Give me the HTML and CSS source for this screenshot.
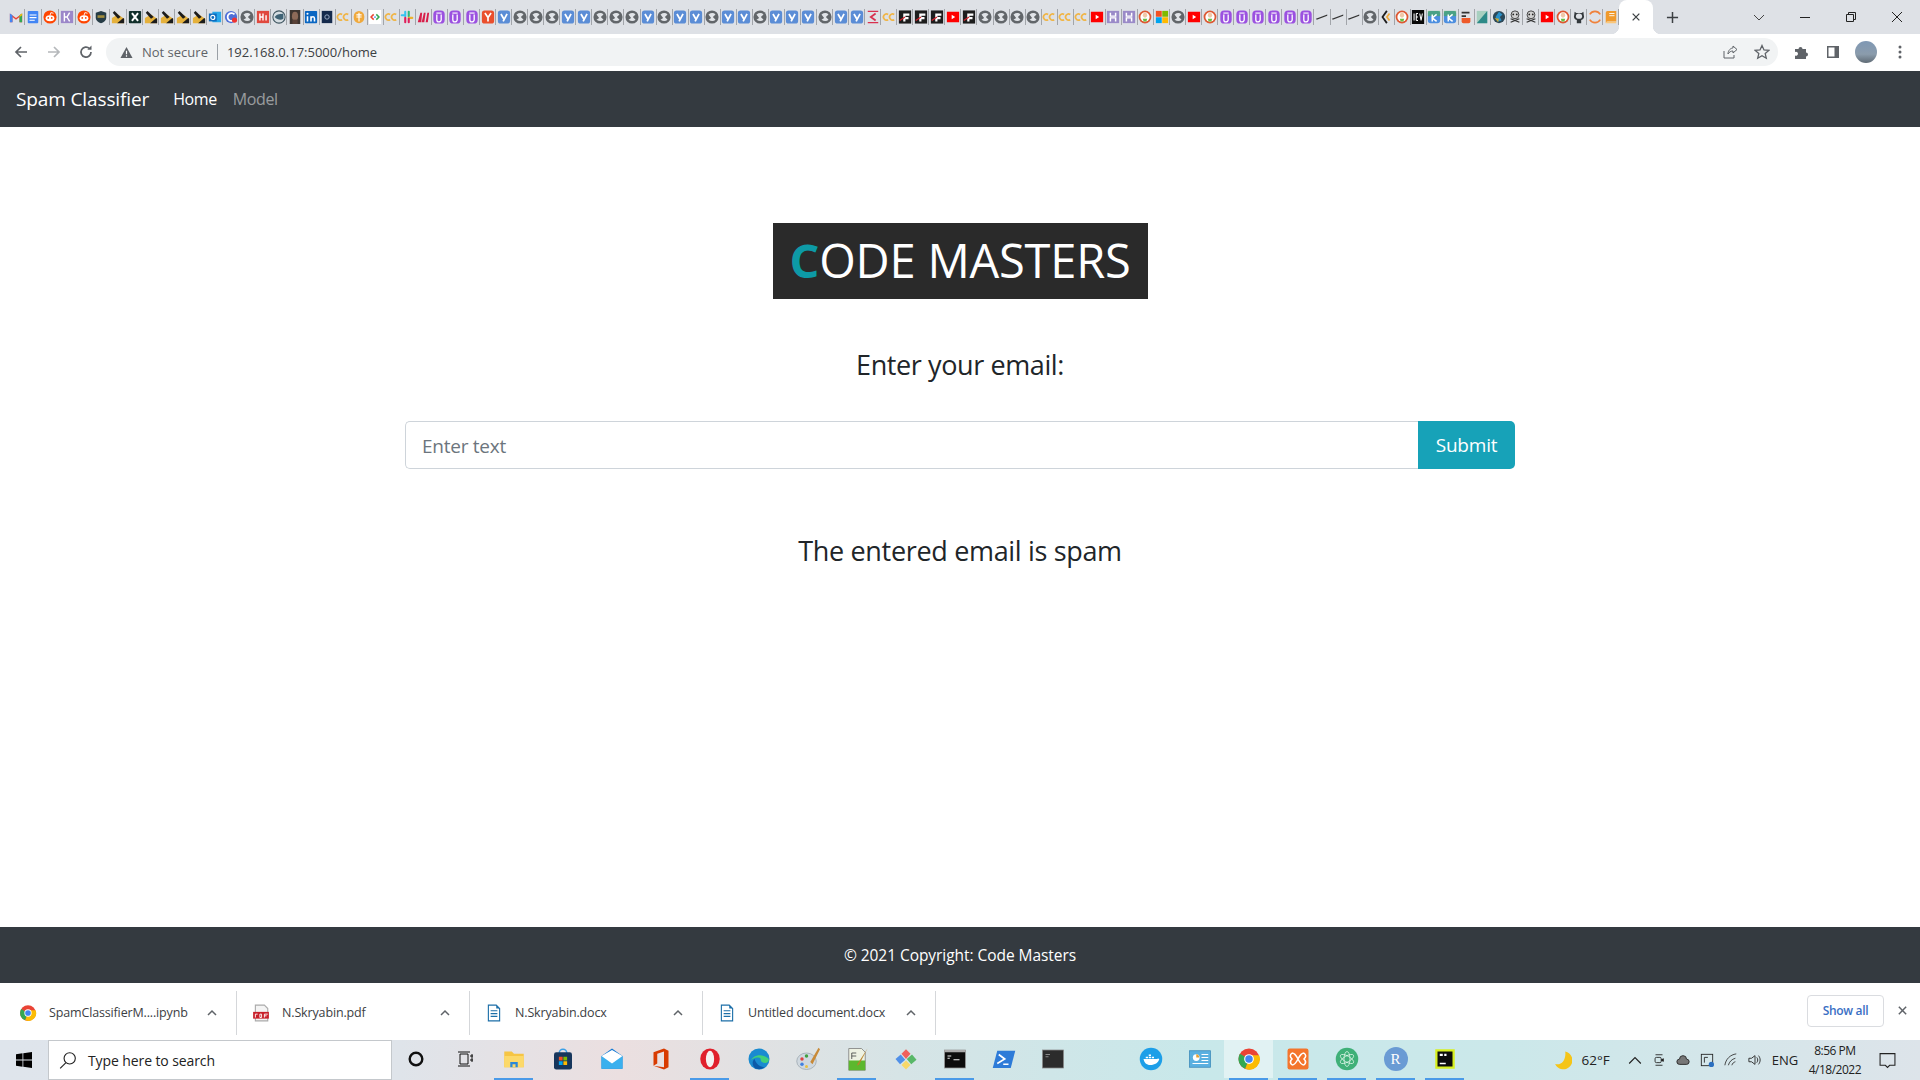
FILE: index.html
```html
<!DOCTYPE html>
<html lang="en">
<head>
    <meta charset="UTF-8">
    <meta name="viewport" content="width=device-width, initial-scale=1.0">
    <title>Spam Classifier</title>
    <link rel="stylesheet" href="styles.css">
</head>
<body>
    <!-- favicon and taskbar icon set -->
    <svg class="icon-defs" aria-hidden="true">
        <symbol id="f-gmail" viewBox="0 0 16 16"><path d="M1 14V4l7 5 7-5v10h-3V8L8 11 4 8v6z" fill="#ea4335"/><path d="M1 14V4l3 2v8z" fill="#4285f4"/><path d="M15 14V4l-3 2v8z" fill="#34a853"/><path d="M12 6l3-2v2l-3 2z" fill="#fbbc04"/></symbol>
        <symbol id="f-doc" viewBox="0 0 16 16"><rect x="2" y="1" width="12" height="14" rx="1" fill="#4285f4"/><path d="M4 5h8v1.400H4zM4 8h8v1.400H4zM4 11h6v1.400H4z" fill="#fff"/></symbol>
        <symbol id="f-reddit" viewBox="0 0 16 16"><circle cx="8" cy="8" r="7.500" fill="#ff4500"/><ellipse cx="8" cy="9.500" rx="5" ry="3.400" fill="#fff"/><circle cx="6" cy="9" r="1" fill="#ff4500"/><circle cx="10" cy="9" r="1" fill="#ff4500"/><path d="M8 6l1-3 3 .7" stroke="#fff" fill="none"/></symbol>
        <symbol id="f-hk" viewBox="0 0 16 16"><rect x="1" y="1" width="14" height="14" fill="#9b87c9"/><path d="M5 3v10M5 8h3l3-5M8 8l3 5" stroke="#fff" stroke-width="1.600" fill="none"/></symbol>
        <symbol id="f-shield" viewBox="0 0 16 16"><path d="M8 1l6 2v6c0 3-3 5-6 6-3-1-6-3-6-6V3z" fill="#263c46"/><path d="M4 6h8v3H4z" fill="#a08c3c"/></symbol>
        <symbol id="f-bee" viewBox="0 0 16 16"><path d="M1 9l7-4 7 5v5H1z" fill="#e5b13c"/><path d="M4 1l7 7-3 2-6-7z" fill="#1c1c1c"/><path d="M7 15l7-6 1 1v5z" fill="#1c1c1c"/></symbol>
        <symbol id="f-x" viewBox="0 0 16 16"><rect x="1" y="1" width="14" height="14" rx="1" fill="#12302c"/><path d="M4.500 3.500l7 9M11.500 3.500l-7 9" stroke="#fff" stroke-width="2.200"/></symbol>
        <symbol id="f-outlook" viewBox="0 0 16 16"><rect x="5" y="2" width="10" height="12" fill="#28a8ea"/><rect x="1" y="4" width="9" height="9" fill="#0f6cbd"/><circle cx="5.500" cy="8.500" r="2.300" fill="none" stroke="#fff" stroke-width="1.300"/></symbol>
        <symbol id="f-cred" viewBox="0 0 16 16"><circle cx="8" cy="8" r="7" fill="#4f6fd8"/><path d="M12 5a4.500 4.500 0 1 0 0 6" stroke="#fff" stroke-width="2" fill="none"/><circle cx="12" cy="11.500" r="3" fill="#e33"/></symbol>
        <symbol id="f-grey" viewBox="0 0 16 16"><circle cx="8" cy="8" r="7.500" fill="#62666a"/><path d="M4 5c3-2 6-2 8 0l-3 3 3 3c-2 2-5 2-8 0l3-2z" fill="#e1e4e8"/></symbol>
        <symbol id="f-hi" viewBox="0 0 16 16"><rect x="1" y="1" width="14" height="14" fill="#e0483e"/><path d="M4.500 4v8M4.500 8h3.500M8 4v8M11.500 6v6" stroke="#fff" stroke-width="1.600"/></symbol>
        <symbol id="f-globe" viewBox="0 0 16 16"><circle cx="8" cy="8" r="7" fill="#d5dde2" stroke="#3f5560" stroke-width="1.200"/><path d="M3 8c3-4 7-3 10-4v6c-3 2-7 1-10-2z" fill="#3f6275"/></symbol>
        <symbol id="f-face" viewBox="0 0 16 16"><rect x="2" y="0" width="12" height="16" fill="#3e3530"/><ellipse cx="8" cy="7" rx="3.500" ry="5" fill="#8d6a58"/><rect x="5" y="11" width="6" height="5" fill="#5a4238"/></symbol>
        <symbol id="f-in" viewBox="0 0 16 16"><rect x="1" y="1" width="14" height="14" rx="1" fill="#0a66c2"/><path d="M4 7v6M8 13V7M8 9.500c1-2.500 4-2.500 4 .5v3" stroke="#fff" stroke-width="1.800" fill="none"/><circle cx="4" cy="4.300" r="1.200" fill="#fff"/></symbol>
        <symbol id="f-e" viewBox="0 0 16 16"><rect x="2" y="1" width="12" height="14" fill="#152a4c"/><circle cx="8" cy="8" r="2.500" fill="none" stroke="#a8b8d0" stroke-width="1"/></symbol>
        <symbol id="f-cc" viewBox="0 0 16 16"><path d="M7 5a3.500 3.500 0 1 0 0 6M14 5a3.500 3.500 0 1 0 0 6" stroke="#f0b546" stroke-width="2" fill="none"/></symbol>
        <symbol id="f-ci" viewBox="0 0 16 16"><rect x="2" y="1" width="12" height="14" rx="6" fill="#f0a93c"/><path d="M8 3v10M5 5.500h6M5 8h6" stroke="#fff" stroke-width="1.300"/></symbol>
        <symbol id="f-code" viewBox="0 0 16 16"><rect x="1" y="0" width="14" height="16" fill="#fff"/><path d="M6.500 5L3.500 8l3 3" stroke="#ea4335" stroke-width="1.700" fill="none"/><path d="M9.500 5l3 3-3 3" stroke="#34a853" stroke-width="1.700" fill="none"/><circle cx="8" cy="8" r="1" fill="#4285f4"/></symbol>
        <symbol id="f-slack" viewBox="0 0 16 16"><path d="M6 2v5M2 6h4" stroke="#36c5f0" stroke-width="2.400" stroke-linecap="round"/><path d="M10 2v5" stroke="#2eb67d" stroke-width="2.400" stroke-linecap="round"/><path d="M10 9h4" stroke="#ecb22e" stroke-width="2.400" stroke-linecap="round"/><path d="M6 9v5M10 10v4" stroke="#e01e5a" stroke-width="2.400" stroke-linecap="round"/></symbol>
        <symbol id="f-m" viewBox="0 0 16 16"><path d="M2 14L5 3h2l-1 11zM6.500 14L9 3h2l-1.500 11zM11 14l2-11h2l-1.500 11z" fill="#d81e4a"/></symbol>
        <symbol id="f-u" viewBox="0 0 16 16"><rect x="1.500" y="0.500" width="13" height="15" rx="4.500" fill="#9b51e0"/><path d="M5.500 5v6a2.500 2.500 0 0 0 5 0V5" stroke="#fff" stroke-width="1.500" fill="none"/><path d="M5 3.500h6" stroke="#fff" stroke-width="1.300"/></symbol>
        <symbol id="f-yred" viewBox="0 0 16 16"><rect x="1" y="0.500" width="14" height="15" rx="3" fill="#ea4f2d"/><path d="M4.500 3.500L8 8.500l3.500-5M8 8.500V13" stroke="#fff" stroke-width="1.900" fill="none"/></symbol>
        <symbol id="f-y" viewBox="0 0 16 16"><rect x="1" y="0.500" width="14" height="15" rx="3" fill="#5b8dd6"/><path d="M4.500 4.500L8 10.500M11.500 4.500L7 13" stroke="#fff" stroke-width="2" fill="none"/></symbol>
        <symbol id="f-kpink" viewBox="0 0 16 16"><path d="M2 1.500h12M2 14.500h12" stroke="#d8304f" stroke-width="1.500"/><path d="M11 4L5.500 8l5.500 4" stroke="#d8304f" stroke-width="2" fill="none"/></symbol>
        <symbol id="f-f" viewBox="0 0 16 16"><rect x="1" y="0.500" width="14" height="15" fill="#1d1d1d"/><path d="M6 4h7v2.500H8.500V8H12v2.500H8.500V13H6z" fill="#fff"/><path d="M2 12l6-4" stroke="#d0202a" stroke-width="1.500"/></symbol>
        <symbol id="f-yt" viewBox="0 0 16 16"><rect x="1" y="2" width="14" height="12" fill="#f00"/><path d="M6.500 5.500v5l4-2.500z" fill="#fff"/></symbol>
        <symbol id="f-h" viewBox="0 0 16 16"><rect x="1" y="1" width="14" height="14" fill="#9a8ac8"/><path d="M5 3v4h6V3M5 13V9h6v4" stroke="#fff" stroke-width="1.700" fill="none"/></symbol>
        <symbol id="f-duck" viewBox="0 0 16 16"><circle cx="8" cy="8" r="7.300" fill="#de5833"/><circle cx="8" cy="8" r="5.300" fill="#fff"/><ellipse cx="8" cy="6" rx="2.500" ry="2.800" fill="#f0c8a8"/><path d="M5.500 10h5l-1 3h-3z" fill="#67bd46"/></symbol>
        <symbol id="f-ms" viewBox="0 0 16 16"><rect x="1" y="1" width="6.700" height="6.700" fill="#f25022"/><rect x="8.300" y="1" width="6.700" height="6.700" fill="#7fba00"/><rect x="1" y="8.300" width="6.700" height="6.700" fill="#00a4ef"/><rect x="8.300" y="8.300" width="6.700" height="6.700" fill="#ffb900"/></symbol>
        <symbol id="f-dash" viewBox="0 0 16 16"><path d="M1 10l13-5v1.500L2 11z" fill="#333"/></symbol>
        <symbol id="f-ccode" viewBox="0 0 16 16"><path d="M9 1L4 8l5 7" stroke="#1c1c1c" stroke-width="2" fill="none"/><path d="M12 4L9 8l3 4" stroke="#f0a93c" stroke-width="2" fill="none"/></symbol>
        <symbol id="f-dev" viewBox="0 0 16 16"><rect x="1" y="0" width="14" height="16" fill="#0a0a0a"/><path d="M3.500 4v8M6 4H8M6 8H8M6 12H8M6 4v8M10 4l1.500 8L13 4" stroke="#fff" stroke-width="1.200" fill="none"/></symbol>
        <symbol id="f-k" viewBox="0 0 16 16"><rect x="1" y="1" width="14" height="14" rx="3" fill="#4d8fe0"/><path d="M1 1h14v6H1z" fill="#49a860" opacity=".7"/><path d="M6 5v8M11 5L6 9l5 4" stroke="#fff" stroke-width="1.700" fill="none"/></symbol>
        <symbol id="f-rdoc" viewBox="0 0 16 16"><rect x="3" y="2" width="9" height="2" fill="#333"/><rect x="3" y="6" width="5" height="2" fill="#333"/><path d="M3 9h10v4a2 2 0 0 1-2 2H5a2 2 0 0 1-2-2z" fill="#ee5a2a"/></symbol>
        <symbol id="f-teal" viewBox="0 0 16 16"><path d="M2 1h12v14H2z" fill="#a8d0c0"/><path d="M14 1v14H2z" fill="#2d8a88"/></symbol>
        <symbol id="f-gdark" viewBox="0 0 16 16"><circle cx="8" cy="8" r="7" fill="#2b4858"/><path d="M8 2l4 3-3 3 2 4-4 1-3-5z" fill="#2a90c8"/><path d="M3 9l5 1-1 4z" fill="#c8a838"/></symbol>
        <symbol id="f-skull" viewBox="0 0 16 16"><circle cx="8" cy="5.500" r="4.500" fill="#d0d0d0" stroke="#333"/><circle cx="6" cy="5" r="1" fill="#222"/><circle cx="10" cy="5" r="1" fill="#222"/><path d="M3 10l10 4M13 10L3 14" stroke="#333" stroke-width="1.400"/></symbol>
        <symbol id="f-gh" viewBox="0 0 16 16"><path d="M3 2l2 1.500h6L13 2l.5 4c1 3-1 5-3 5.500V15h-5v-3.500c-2-.5-4-2.500-3-5.500z" fill="#33383c"/><ellipse cx="8" cy="7" rx="3.500" ry="3" fill="#dee1e6"/></symbol>
        <symbol id="f-ocirc" viewBox="0 0 16 16"><path d="M2 5a7 7 0 0 1 12 0M2 11a7 7 0 0 0 12 0" stroke="#f0813a" stroke-width="1.800" fill="none"/></symbol>
        <symbol id="f-book" viewBox="0 0 16 16"><path d="M4 1h10v12H4a2 2 0 0 0-2 2V3a2 2 0 0 1 2-2z" fill="#f09a2c"/><path d="M6 4h6M6 6.500h6" stroke="#fff" stroke-width="1"/><path d="M2 15a2 2 0 0 1 2-2h10v2z" fill="#fbc77a"/></symbol>

        <symbol id="t-folder" viewBox="0 0 32 32"><path d="M3 6h10l3 3h13v18H3z" fill="#f6c544"/><path d="M3 12h26v15H3z" fill="#fcd96a"/><path d="M11 20h10v7H11z" fill="#2b88d8"/><path d="M14 23h4v4h-4z" fill="#fcd96a"/></symbol>
        <symbol id="t-store" viewBox="0 0 32 32"><path d="M11 8a5 5 0 0 1 10 0" fill="none" stroke="#3aa0e8" stroke-width="2"/><rect x="4" y="7" width="24" height="23" rx="3" fill="#17365c"/><rect x="10.500" y="13" width="5" height="5" fill="#f25022"/><rect x="16.500" y="13" width="5" height="5" fill="#7fba00"/><rect x="10.500" y="19" width="5" height="5" fill="#00a4ef"/><rect x="16.500" y="19" width="5" height="5" fill="#ffb900"/></symbol>
        <symbol id="t-mail" viewBox="0 0 32 32"><path d="M16 2l14 10v17H2V12z" fill="#0f78d4"/><path d="M2 12h28v17H2z" fill="#3bb0ee"/><path d="M2 12l14 10 14-10-14-8z" fill="#fff"/></symbol>
        <symbol id="t-office" viewBox="0 0 32 32"><path d="M6 7l14-5 6 3v22l-6 3-14-5 14 2V6l-9 3v13l-5 3z" fill="#d83b01"/></symbol>
        <symbol id="t-opera" viewBox="0 0 32 32"><ellipse cx="16" cy="16" rx="13" ry="14" fill="#e0202c"/><ellipse cx="16" cy="16" rx="5.500" ry="11" fill="#f4f1f1"/></symbol>
        <symbol id="t-edge" viewBox="0 0 32 32"><circle cx="16" cy="16" r="14" fill="#1a8bd0"/><path d="M5 20C6 10 22 8 29 16c1 6-6 6-9 4-3-2 0-6-5-6-5 0-10 2-10 6z" fill="#40d07a"/><path d="M12 29c-5-3-6-10-2-13 2 6 6 10 13 11-3 3-7 3-11 2z" fill="#0c5aa8"/></symbol>
        <symbol id="t-paint" viewBox="0 0 32 32"><ellipse cx="14" cy="19" rx="13" ry="11" fill="#cfd8df" stroke="#9aa6ae"/><circle cx="8" cy="16" r="2.300" fill="#e04040"/><circle cx="14" cy="12" r="2.300" fill="#40a040"/><circle cx="8" cy="23" r="2.300" fill="#4080e0"/><circle cx="14" cy="26" r="2" fill="#e8c040"/><path d="M30 1l-11 19 3 3 10-20z" fill="#c88a38"/></symbol>
        <symbol id="t-note" viewBox="0 0 32 32"><path d="M5 2h17l5 5v24H5z" fill="#eef2e2" stroke="#777"/><rect x="5" y="18" width="22" height="13" fill="#5cb82e"/><path d="M9 8h6M9 12h6M9 8v8" stroke="#333"/><path d="M30 2L17 22l-1 3 3-2z" fill="#b8842c"/></symbol>
        <symbol id="t-diamond" viewBox="0 0 32 32"><path d="M16 3l6 6-6 7-6-7z" fill="#f0605a"/><path d="M24 10l6 7-7 6-6-7z" fill="#58b868"/><path d="M9 10l6 7-7 6-6-7z" fill="#5090e8"/><path d="M16 18l6 6-6 6-6-6z" fill="#f8d868"/></symbol>
        <symbol id="t-cmd" viewBox="0 0 32 32"><rect x="2" y="4" width="28" height="24" fill="#0c0c0c" stroke="#999"/><rect x="2" y="4" width="28" height="3" fill="#aaa"/><path d="M6 12h5M6 15h3M14 17h8" stroke="#eee" stroke-width="1.500"/></symbol>
        <symbol id="t-ps" viewBox="0 0 32 32"><path d="M7 5h24l-6 23H1z" fill="#2d7bd8"/><path d="M9 10l8 6-10 6M15 23h7" stroke="#fff" stroke-width="2.200" fill="none"/></symbol>
        <symbol id="t-cmd2" viewBox="0 0 32 32"><rect x="2" y="4" width="28" height="24" fill="#2c2c2c" stroke="#888"/><path d="M6 10h6M6 13h4" stroke="#888" stroke-width="1.500"/></symbol>
        <symbol id="t-docker" viewBox="0 0 32 32"><circle cx="16" cy="16" r="15" fill="#1d9fe8"/><path d="M6 16h18c1-1 2-1 3 0-1 5-6 8-12 8-5 0-8-3-9-8z" fill="#fff"/><path d="M9 13h3v2H9zM13 13h3v2h-3zM17 13h3v2h-3zM13 10h3v2h-3z" fill="#fff"/></symbol>
        <symbol id="t-panel" viewBox="0 0 32 32"><rect x="2" y="5" width="28" height="22" fill="#5ab0e0" stroke="#3a88b8"/><circle cx="11" cy="14" r="4.500" fill="#fff"/><path d="M11 14V9.500a4.500 4.500 0 0 1 4 4.500z" fill="#e8a030"/><path d="M18 10h9M18 14h9M18 18h9M6 22h21" stroke="#fff" stroke-width="1.500"/></symbol>
        <symbol id="t-chrome" viewBox="0 0 32 32"><circle cx="16" cy="16" r="14" fill="#ea4335"/><path d="M16 16L3.900 9A14 14 0 0 0 11 29.100z" fill="#34a853"/><path d="M16 16l-5 13.100A14 14 0 0 0 29.500 11H16z" fill="#fbbc04"/><circle cx="16" cy="16" r="6.500" fill="#fff"/><circle cx="16" cy="16" r="5" fill="#4285f4"/></symbol>
        <symbol id="t-xampp" viewBox="0 0 32 32"><rect x="2" y="2" width="28" height="28" rx="3" fill="#f4752c"/><path d="M8 8c4 0 6 4 8 8s4 8 8 8M24 8c-4 0-6 4-8 8s-4 8-8 8M8 8c-3 3-3 5 0 8-3 3-3 5 0 8M24 8c3 3 3 5 0 8 3 3 3 5 0 8" stroke="#fff" stroke-width="2" fill="none"/></symbol>
        <symbol id="t-atom" viewBox="0 0 32 32"><circle cx="16" cy="16" r="15" fill="#3fb078"/><ellipse cx="16" cy="16" rx="10" ry="4" fill="none" stroke="#dff5e8" transform="rotate(30 16 16)"/><ellipse cx="16" cy="16" rx="10" ry="4" fill="none" stroke="#dff5e8" transform="rotate(-30 16 16)"/><ellipse cx="16" cy="16" rx="10" ry="4" fill="none" stroke="#dff5e8" transform="rotate(90 16 16)"/></symbol>
        <symbol id="t-pycharm" viewBox="0 0 32 32"><rect x="3" y="3" width="26" height="26" fill="#d8f020"/><rect x="6" y="6" width="20" height="20" fill="#0c0c0c"/><path d="M9 9h4v3H9zM15 9h3v3h-3z" fill="#fff"/><rect x="9" y="21" width="8" height="2" fill="#fff"/></symbol>
    </svg>

    <!-- browser chrome -->
    <div class="tab-strip">
        <ul class="tab-list">
            <li class="tab"><svg><use href="#f-gmail"/></svg></li>
            <li class="tab"><svg><use href="#f-doc"/></svg></li>
            <li class="tab"><svg><use href="#f-reddit"/></svg></li>
            <li class="tab"><svg><use href="#f-hk"/></svg></li>
            <li class="tab"><svg><use href="#f-reddit"/></svg></li>
            <li class="tab"><svg><use href="#f-shield"/></svg></li>
            <li class="tab"><svg><use href="#f-bee"/></svg></li>
            <li class="tab"><svg><use href="#f-x"/></svg></li>
            <li class="tab"><svg><use href="#f-bee"/></svg></li>
            <li class="tab"><svg><use href="#f-bee"/></svg></li>
            <li class="tab"><svg><use href="#f-bee"/></svg></li>
            <li class="tab"><svg><use href="#f-bee"/></svg></li>
            <li class="tab"><svg><use href="#f-outlook"/></svg></li>
            <li class="tab"><svg><use href="#f-cred"/></svg></li>
            <li class="tab"><svg><use href="#f-grey"/></svg></li>
            <li class="tab"><svg><use href="#f-hi"/></svg></li>
            <li class="tab"><svg><use href="#f-globe"/></svg></li>
            <li class="tab"><svg><use href="#f-face"/></svg></li>
            <li class="tab"><svg><use href="#f-in"/></svg></li>
            <li class="tab"><svg><use href="#f-e"/></svg></li>
            <li class="tab"><svg><use href="#f-cc"/></svg></li>
            <li class="tab"><svg><use href="#f-ci"/></svg></li>
            <li class="tab"><svg><use href="#f-code"/></svg></li>
            <li class="tab"><svg><use href="#f-cc"/></svg></li>
            <li class="tab"><svg><use href="#f-slack"/></svg></li>
            <li class="tab"><svg><use href="#f-m"/></svg></li>
            <li class="tab"><svg><use href="#f-u"/></svg></li>
            <li class="tab"><svg><use href="#f-u"/></svg></li>
            <li class="tab"><svg><use href="#f-u"/></svg></li>
            <li class="tab"><svg><use href="#f-yred"/></svg></li>
            <li class="tab"><svg><use href="#f-y"/></svg></li>
            <li class="tab"><svg><use href="#f-grey"/></svg></li>
            <li class="tab"><svg><use href="#f-grey"/></svg></li>
            <li class="tab"><svg><use href="#f-grey"/></svg></li>
            <li class="tab"><svg><use href="#f-y"/></svg></li>
            <li class="tab"><svg><use href="#f-y"/></svg></li>
            <li class="tab"><svg><use href="#f-grey"/></svg></li>
            <li class="tab"><svg><use href="#f-grey"/></svg></li>
            <li class="tab"><svg><use href="#f-grey"/></svg></li>
            <li class="tab"><svg><use href="#f-y"/></svg></li>
            <li class="tab"><svg><use href="#f-grey"/></svg></li>
            <li class="tab"><svg><use href="#f-y"/></svg></li>
            <li class="tab"><svg><use href="#f-y"/></svg></li>
            <li class="tab"><svg><use href="#f-grey"/></svg></li>
            <li class="tab"><svg><use href="#f-y"/></svg></li>
            <li class="tab"><svg><use href="#f-y"/></svg></li>
            <li class="tab"><svg><use href="#f-grey"/></svg></li>
            <li class="tab"><svg><use href="#f-y"/></svg></li>
            <li class="tab"><svg><use href="#f-y"/></svg></li>
            <li class="tab"><svg><use href="#f-y"/></svg></li>
            <li class="tab"><svg><use href="#f-grey"/></svg></li>
            <li class="tab"><svg><use href="#f-y"/></svg></li>
            <li class="tab"><svg><use href="#f-y"/></svg></li>
            <li class="tab"><svg><use href="#f-kpink"/></svg></li>
            <li class="tab"><svg><use href="#f-cc"/></svg></li>
            <li class="tab"><svg><use href="#f-f"/></svg></li>
            <li class="tab"><svg><use href="#f-f"/></svg></li>
            <li class="tab"><svg><use href="#f-f"/></svg></li>
            <li class="tab"><svg><use href="#f-yt"/></svg></li>
            <li class="tab"><svg><use href="#f-f"/></svg></li>
            <li class="tab"><svg><use href="#f-grey"/></svg></li>
            <li class="tab"><svg><use href="#f-grey"/></svg></li>
            <li class="tab"><svg><use href="#f-grey"/></svg></li>
            <li class="tab"><svg><use href="#f-grey"/></svg></li>
            <li class="tab"><svg><use href="#f-cc"/></svg></li>
            <li class="tab"><svg><use href="#f-cc"/></svg></li>
            <li class="tab"><svg><use href="#f-cc"/></svg></li>
            <li class="tab"><svg><use href="#f-yt"/></svg></li>
            <li class="tab"><svg><use href="#f-h"/></svg></li>
            <li class="tab"><svg><use href="#f-h"/></svg></li>
            <li class="tab"><svg><use href="#f-duck"/></svg></li>
            <li class="tab"><svg><use href="#f-ms"/></svg></li>
            <li class="tab"><svg><use href="#f-grey"/></svg></li>
            <li class="tab"><svg><use href="#f-yt"/></svg></li>
            <li class="tab"><svg><use href="#f-duck"/></svg></li>
            <li class="tab"><svg><use href="#f-u"/></svg></li>
            <li class="tab"><svg><use href="#f-u"/></svg></li>
            <li class="tab"><svg><use href="#f-u"/></svg></li>
            <li class="tab"><svg><use href="#f-u"/></svg></li>
            <li class="tab"><svg><use href="#f-u"/></svg></li>
            <li class="tab"><svg><use href="#f-u"/></svg></li>
            <li class="tab"><svg><use href="#f-dash"/></svg></li>
            <li class="tab"><svg><use href="#f-dash"/></svg></li>
            <li class="tab"><svg><use href="#f-dash"/></svg></li>
            <li class="tab"><svg><use href="#f-grey"/></svg></li>
            <li class="tab"><svg><use href="#f-ccode"/></svg></li>
            <li class="tab"><svg><use href="#f-duck"/></svg></li>
            <li class="tab"><svg><use href="#f-dev"/></svg></li>
            <li class="tab"><svg><use href="#f-k"/></svg></li>
            <li class="tab"><svg><use href="#f-k"/></svg></li>
            <li class="tab"><svg><use href="#f-rdoc"/></svg></li>
            <li class="tab"><svg><use href="#f-teal"/></svg></li>
            <li class="tab"><svg><use href="#f-gdark"/></svg></li>
            <li class="tab"><svg><use href="#f-skull"/></svg></li>
            <li class="tab"><svg><use href="#f-skull"/></svg></li>
            <li class="tab"><svg><use href="#f-yt"/></svg></li>
            <li class="tab"><svg><use href="#f-duck"/></svg></li>
            <li class="tab"><svg><use href="#f-gh"/></svg></li>
            <li class="tab"><svg><use href="#f-ocirc"/></svg></li>
            <li class="tab"><svg><use href="#f-book"/></svg></li>
        </ul>
        <div class="tab-active">
            <svg viewBox="0 0 12 12"><path d="M2 2l8 8M10 2l-8 8" stroke="#3c4043" stroke-width="1.500"/></svg>
        </div>
        <svg class="new-tab" viewBox="0 0 14 14"><path d="M7 1v12M1 7h12" stroke="#3c4043" stroke-width="1.600"/></svg>
        <div class="window-btns">
            <svg viewBox="0 0 12 12"><path d="M1 4l5 5 5-5" stroke="#444" fill="none"/></svg>
            <svg viewBox="0 0 12 12"><path d="M1 6.500h10" stroke="#222"/></svg>
            <svg viewBox="0 0 12 12"><path d="M1.500 3.500h7v7h-7zM3.500 3.500v-2h7v7h-2" stroke="#222" fill="none"/></svg>
            <svg viewBox="0 0 12 12"><path d="M1 1l10 10M11 1L1 11" stroke="#222"/></svg>
        </div>
    </div>

    <div class="toolbar">
        <svg class="tool-icon" viewBox="0 0 16 16"><path d="M14 8H3M8 3L3 8l5 5" stroke="#5f6368" stroke-width="1.700" fill="none"/></svg>
        <svg class="tool-icon" viewBox="0 0 16 16"><path d="M2 8h11M8 3l5 5-5 5" stroke="#b5b8bb" stroke-width="1.700" fill="none"/></svg>
        <svg class="tool-icon" viewBox="0 0 16 16"><path d="M13 8a5 5 0 1 1-1.500-3.500" stroke="#5f6368" stroke-width="1.700" fill="none"/><path d="M13.500 1.500v4.200H9.300z" fill="#5f6368"/></svg>
        <div class="omnibox">
            <svg class="warn" viewBox="0 0 14 14"><path d="M7 1l6.500 12H.5z" fill="#5f6368"/><path d="M7 5v4M7 10v1.500" stroke="#fff" stroke-width="1.300"/></svg>
            <span class="not-secure">Not secure</span>
            <span class="url">192.168.0.17:5000/home</span>
            <svg class="omni-icon push" viewBox="0 0 16 16"><path d="M2 7v7h10v-3M6 10c0-4 3-6 5-6V2l4 3.500L11 9V7c-2 0-4 1-5 3z" stroke="#5f6368" fill="none"/></svg>
            <svg class="omni-icon" viewBox="0 0 16 16"><path d="M8 1.500l2 4.500 4.800.4-3.600 3.200 1.100 4.700L8 11.800l-4.300 2.500 1.100-4.700L1.200 6.400 6 6z" stroke="#5f6368" stroke-width="1.300" fill="none"/></svg>
        </div>
        <div class="toolbar-right">
            <svg viewBox="0 0 16 16"><path d="M2 5h3.500a2 2 0 1 1 4 0H13v3.500a2 2 0 1 1 0 4V15H2v-3.500a2 2 0 1 0 0-3.500z" fill="#5f6368"/></svg>
            <svg viewBox="0 0 16 16"><path d="M2 2h12v12H2z" fill="#5f6368"/><path d="M3.500 3.500h6v9h-6z" fill="#fff"/></svg>
            <div class="avatar"></div>
            <svg viewBox="0 0 16 16"><circle cx="8" cy="3" r="1.500" fill="#5f6368"/><circle cx="8" cy="8" r="1.500" fill="#5f6368"/><circle cx="8" cy="13" r="1.500" fill="#5f6368"/></svg>
        </div>
    </div>

    <!-- page -->
    <nav class="navbar">
        <a class="brand" href="#">Spam Classifier</a>
        <a class="nav-link active" href="#">Home</a>
        <a class="nav-link" href="#">Model</a>
    </nav>

    <main class="content">
        <div class="logo"><span class="logo-c">C</span>ODE MASTERS</div>
        <h3 class="prompt">Enter your email:</h3>
        <form class="input-group">
            <input class="form-input" type="text" placeholder="Enter text">
            <button class="btn-submit" type="button">Submit</button>
        </form>
        <h3 class="result">The entered email is spam</h3>
    </main>

    <footer class="footer">© 2021 Copyright: Code Masters</footer>

    <!-- downloads shelf -->
    <div class="shelf">
        <div class="download">
            <svg class="dl-icon" viewBox="0 0 32 32"><use href="#t-chrome"/></svg>
            <span class="dl-name">SpamClassifierM....ipynb</span>
            <svg class="dl-caret" viewBox="0 0 12 12"><path d="M2 8l4-4 4 4" stroke="#5f6368" stroke-width="1.500" fill="none"/></svg>
        </div>
        <div class="download">
            <svg class="dl-icon" viewBox="0 0 16 16"><path d="M3 1h8l3 3v11H3z" fill="#f4f4f4" stroke="#aaa"/><rect x="1" y="7" width="14" height="6" fill="#c8202a"/><path d="M3 9h2M3 9v3M7 9v3h1.500V9zM11 9v3M11 9h3M11 10.500h2" stroke="#fff" stroke-width=".8" fill="none"/></svg>
            <span class="dl-name">N.Skryabin.pdf</span>
            <svg class="dl-caret" viewBox="0 0 12 12"><path d="M2 8l4-4 4 4" stroke="#5f6368" stroke-width="1.500" fill="none"/></svg>
        </div>
        <div class="download">
            <svg class="dl-icon" viewBox="0 0 16 16"><path d="M3 1h7l3 3v11H3z" fill="#fff" stroke="#1c6fa8"/><path d="M10 1l3 3h-3z" fill="#1c6fa8"/><path d="M5 6h6M5 8.500h6M5 11h6" stroke="#1c6fa8"/></svg>
            <span class="dl-name">N.Skryabin.docx</span>
            <svg class="dl-caret" viewBox="0 0 12 12"><path d="M2 8l4-4 4 4" stroke="#5f6368" stroke-width="1.500" fill="none"/></svg>
        </div>
        <div class="download">
            <svg class="dl-icon" viewBox="0 0 16 16"><path d="M3 1h7l3 3v11H3z" fill="#fff" stroke="#1c6fa8"/><path d="M10 1l3 3h-3z" fill="#1c6fa8"/><path d="M5 6h6M5 8.500h6M5 11h6" stroke="#1c6fa8"/></svg>
            <span class="dl-name">Untitled document.docx</span>
            <svg class="dl-caret" viewBox="0 0 12 12"><path d="M2 8l4-4 4 4" stroke="#5f6368" stroke-width="1.500" fill="none"/></svg>
        </div>
        <button class="show-all" type="button">Show all</button>
        <svg class="shelf-close" viewBox="0 0 12 12"><path d="M2 2l8 8M10 2l-8 8" stroke="#5f6368" stroke-width="1.600"/></svg>
    </div>

    <!-- windows taskbar -->
    <div class="taskbar">
        <div class="start">
            <svg viewBox="0 0 16 16"><path d="M0 2.200l6.500-.9v6.300H0zM7.300 1.200L16 0v7.600H7.300zM0 8.400h6.500v6.300L0 13.800zM7.300 8.400H16V16l-8.700-1.200z" fill="#000"/></svg>
        </div>
        <div class="search">
            <svg viewBox="0 0 16 16"><circle cx="9.500" cy="6.500" r="5" stroke="#222" fill="none"/><path d="M6 10.500L1 15.500" stroke="#222"/></svg>
            <span>Type here to search</span>
        </div>
        <div class="task-apps">
            <div class="task"><svg class="small" viewBox="0 0 16 16"><circle cx="8" cy="8" r="6.300" stroke="#111" stroke-width="2.400" fill="none"/></svg></div>
            <div class="task"><svg class="small" viewBox="0 0 16 16"><path d="M3 3h8v10H3zM1 1h12M1 15h12M14 4h2v2h-2zM14 8h2v2h-2z" stroke="#111" fill="none"/></svg></div>
            <div class="task running"><svg><use href="#t-folder"/></svg></div>
            <div class="task"><svg><use href="#t-store"/></svg></div>
            <div class="task"><svg><use href="#t-mail"/></svg></div>
            <div class="task"><svg><use href="#t-office"/></svg></div>
            <div class="task running"><svg><use href="#t-opera"/></svg></div>
            <div class="task"><svg><use href="#t-edge"/></svg></div>
            <div class="task"><svg><use href="#t-paint"/></svg></div>
            <div class="task running"><svg><use href="#t-note"/></svg></div>
            <div class="task"><svg><use href="#t-diamond"/></svg></div>
            <div class="task running"><svg><use href="#t-cmd"/></svg></div>
            <div class="task"><svg><use href="#t-ps"/></svg></div>
            <div class="task"><svg><use href="#t-cmd2"/></svg></div>
            <div class="task"></div>
            <div class="task"><svg><use href="#t-docker"/></svg></div>
            <div class="task"><svg><use href="#t-panel"/></svg></div>
            <div class="task running current"><svg><use href="#t-chrome"/></svg></div>
            <div class="task running"><svg><use href="#t-xampp"/></svg></div>
            <div class="task running"><svg><use href="#t-atom"/></svg></div>
            <div class="task running"><div class="r-badge">R</div></div>
            <div class="task running"><svg><use href="#t-pycharm"/></svg></div>
        </div>
        <div class="tray">
            <svg class="moon" viewBox="0 0 16 16"><path d="M10 0a8 8 0 1 1-9 11c5 2 10-3 9-11z" fill="#f5c518"/></svg>
            <span class="temp">62°F</span>
            <svg viewBox="0 0 12 12"><path d="M1 9l5-5 5 5" stroke="#222" fill="none"/></svg>
            <svg viewBox="0 0 16 16"><path d="M4 2h8M4 14h8" stroke="#222"/><rect x="3.500" y="5" width="7" height="6" rx="1.500" stroke="#222" fill="none"/><path d="M10.500 7l3-1v4l-3-1z" fill="#222"/></svg>
            <svg viewBox="0 0 16 16"><path d="M4 13a3 3 0 0 1 0-6 4 4 0 0 1 8 0 3 3 0 0 1 0 6z" fill="#777" stroke="#222"/></svg>
            <svg viewBox="0 0 16 16"><rect x="1.500" y="1.500" width="13" height="13" fill="none" stroke="#222"/><path d="M5 5h4M5 5v6" stroke="#222"/><circle cx="13" cy="13" r="3" fill="#2a6fc0"/></svg>
            <svg viewBox="0 0 16 16"><path d="M1 14C2 7 7 2 14 1M5 14c1-4 4-7 8-8M9 14c.5-2 2-3.500 4-4" stroke="#333" fill="none"/></svg>
            <svg viewBox="0 0 16 16"><path d="M1 6h3l4-3v10l-4-3H1zM10 5c1.500 2 1.500 4 0 6M12 3c2.500 3 2.500 7 0 10" stroke="#222" fill="none"/></svg>
            <span class="lang">ENG</span>
            <div class="clock"><span>8:56 PM</span><span>4/18/2022</span></div>
            <svg class="notify" viewBox="0 0 16 16"><path d="M1 1.500h14v11H10l-2 2-2-2H1z" stroke="#222" fill="none"/></svg>
        </div>
    </div>
</body>
</html>
```

FILE: styles.css
```css
/* Page and browser frame */
* {
    box-sizing: border-box;
}

body {
    font-family: "Open Sans", "Liberation Sans", sans-serif;
    background-color: #fff;
    color: #212529;
    margin: 0;
    height: 100vh;
    display: flex;
    flex-direction: column;
    overflow: hidden;
}

.icon-defs {
    display: none;
}

/* Tab strip */
.tab-strip {
    height: 34px;
    flex: none;
    background-color: #dee1e6;
    display: flex;
    align-items: center;
    padding-left: 8px;
}

.tab-list {
    list-style: none;
    margin: 0;
    padding: 0;
    width: 1611px;
    display: flex;
}

.tab {
    flex: 1;
    height: 16px;
    display: flex;
    justify-content: center;
    border-right: 1px solid #a2a5aa;
}

/* the first tabs are a little wider than the rest */
.tab:nth-child(-n+7) {
    flex: 0 0 17px;
}

.tab svg {
    width: 14px;
    height: 16px;
}

.tab-active {
    width: 34px;
    height: 34px;
    background-color: #fff;
    border-radius: 8px 8px 0 0;
    display: flex;
    align-items: center;
    justify-content: center;
    position: relative;
}

.tab-active::before,
.tab-active::after {
    content: "";
    position: absolute;
    bottom: 0;
    width: 8px;
    height: 8px;
}

.tab-active::before {
    left: -8px;
    background: radial-gradient(circle at 0 0, #dee1e6 8px, #fff 8.5px);
}

.tab-active::after {
    right: -8px;
    background: radial-gradient(circle at 100% 0, #dee1e6 8px, #fff 8.5px);
}

.tab-active svg {
    width: 10px;
    height: 10px;
}

.new-tab {
    width: 13px;
    height: 13px;
    margin-left: 13px;
}

.window-btns {
    display: flex;
    align-items: center;
    gap: 34px;
    margin-left: auto;
    margin-right: 17px;
}

.window-btns svg {
    width: 12px;
    height: 12px;
}

/* Toolbar */
.toolbar {
    height: 37px;
    flex: none;
    background-color: #fff;
    display: flex;
    align-items: center;
    padding: 0 0 1px 13px;
}

.tool-icon {
    width: 16px;
    height: 16px;
    margin-right: 16.500px;
}

.omnibox {
    width: 1672px;
    height: 28px;
    margin-left: -4.500px;
    background-color: #f1f3f4;
    border-radius: 14px;
    display: flex;
    align-items: center;
    padding: 0 8px 0 14px;
    font-size: 13px;
}

.warn {
    width: 13px;
    height: 13px;
    margin-right: 9px;
}

.not-secure {
    color: #5f6368;
    padding-right: 9px;
    border-right: 1px solid #9aa0a6;
    line-height: 16px;
    margin-right: 9px;
}

.url {
    color: #3c4043;
}

.omni-icon {
    width: 16px;
    height: 16px;
    margin-left: 16px;
}

.omni-icon.push {
    margin-left: auto;
}

.toolbar-right {
    display: flex;
    align-items: center;
    gap: 16px;
    margin-left: 15px;
}

.toolbar-right svg {
    width: 16px;
    height: 16px;
}

.avatar {
    width: 22px;
    height: 22px;
    margin: 0 -1px 0 -2px;
    border-radius: 50%;
    background: linear-gradient(#7f98b4, #8b9cac 60%, #5f6b75);
}

/* Navbar */
.navbar {
    height: 56px;
    flex: none;
    background-color: #343a40;
    display: flex;
    align-items: center;
    padding: 0 16px;
}

.navbar a {
    text-decoration: none;
}

.brand {
    color: #fff;
    font-size: 19px;
    letter-spacing: -0.12px;
    margin-right: 24px;
}

.nav-link {
    color: rgba(255, 255, 255, 0.5);
    font-size: 16px;
    letter-spacing: -0.4px;
    margin-right: 16px;
}

.nav-link.active {
    color: #fff;
}

/* Main content */
.content {
    flex: 1;
    display: flex;
    flex-direction: column;
    align-items: center;
    padding-top: 96px;
}

.logo {
    width: 375px;
    height: 76px;
    background-color: #2a2a2a;
    color: #fff;
    font-size: 47px;
    line-height: 74px;
    letter-spacing: -0.2px;
    text-align: center;
    white-space: nowrap;
}

.logo-c {
    color: #0d9aa6;
    font-weight: 700;
}

.prompt,
.result {
    font-size: 27px;
    font-weight: 400;
    line-height: 34px;
    letter-spacing: -0.4px;
    margin: 0;
}

.prompt {
    margin-top: 49px;
    margin-bottom: 39px;
}

.result {
    margin-top: 65px;
    letter-spacing: -0.33px;
}

.input-group {
    width: 1110px;
    display: flex;
}

.form-input {
    flex: 1;
    height: 48px;
    font-family: inherit;
    font-size: 19px;
    letter-spacing: -0.25px;
    padding: 1px 16px 0;
    border: 1px solid #ced4da;
    border-right: none;
    border-radius: 5px 0 0 5px;
    outline: none;
}

.form-input::placeholder {
    color: #6c757d;
}

.btn-submit {
    width: 97px;
    height: 48px;
    font-family: inherit;
    font-size: 19px;
    letter-spacing: -0.2px;
    color: #fff;
    background-color: #17a2b8;
    border: none;
    border-radius: 0 5px 5px 0;
}

/* Footer */
.footer {
    height: 56px;
    flex: none;
    background-color: #343a40;
    color: #fff;
    font-size: 15.500px;
    letter-spacing: -0.05px;
    display: flex;
    align-items: center;
    justify-content: center;
}

/* Downloads shelf */
.shelf {
    height: 57px;
    flex: none;
    background-color: #fff;
    display: flex;
    align-items: center;
    padding-left: 4px;
}

.download {
    width: 233px;
    height: 44px;
    margin-top: 2px;
    display: flex;
    align-items: center;
    border-right: 1px solid #d5d7da;
    padding-left: 15px;
}

.dl-icon {
    width: 18px;
    height: 18px;
    flex: none;
    margin-right: 12px;
}

.dl-name {
    font-size: 12.500px;
    letter-spacing: -0.15px;
    color: #3c4043;
    white-space: nowrap;
    width: 157px;
}

.dl-caret {
    width: 12px;
    height: 12px;
}

.show-all {
    margin-left: auto;
    width: 77px;
    height: 32px;
    margin-bottom: 2px;
    font-family: inherit;
    font-size: 12px;
    font-weight: 600;
    letter-spacing: -0.3px;
    color: #3a6fc4;
    background-color: #fff;
    border: 1px solid #dadce0;
    border-radius: 4px;
}

.shelf-close {
    width: 11px;
    height: 11px;
    margin: 0 12px 2px 13px;
}

/* Taskbar */
.taskbar {
    height: 40px;
    flex: none;
    background: linear-gradient(90deg, #dfe5ec 0, #dfe4ea 400px, #ebdfe0 620px, #d6e4e6 900px, #c8e8ea 1200px, #cbe8ea 1500px, #dde4ea 1920px);
    display: flex;
    align-items: center;
    position: relative;
}

.start {
    width: 48px;
    display: flex;
    justify-content: center;
}

.start svg {
    width: 16px;
    height: 16px;
}

.search {
    width: 344px;
    height: 40px;
    background-color: #fff;
    border: 1px solid #c4c8cc;
    display: flex;
    align-items: center;
    padding-left: 10px;
    font-size: 14px;
    letter-spacing: -0.1px;
    color: #222;
}

.search svg {
    width: 18px;
    height: 18px;
    margin-right: 11px;
}

.task-apps {
    display: flex;
    margin-left: -1px;
}

.task {
    width: 49px;
    height: 40px;
    display: flex;
    align-items: center;
    justify-content: center;
    border-bottom: 2px solid transparent;
    background-clip: padding-box;
    position: relative;
}

.task svg {
    width: 24px;
    height: 24px;
}

.task svg.small {
    width: 16px;
    height: 16px;
}

.task.running::after {
    content: "";
    position: absolute;
    left: 5px;
    right: 5px;
    bottom: -2px;
    height: 2px;
    background-color: #4a9ae8;
}

.task.current {
    background-color: rgba(255, 255, 255, 0.45);
}

.r-badge {
    width: 24px;
    height: 24px;
    border-radius: 50%;
    background-color: #6a9bd4;
    color: #fff;
    font-family: "Liberation Serif", serif;
    font-size: 15px;
    text-align: center;
    line-height: 24px;
}

.tray {
    margin-left: auto;
    height: 40px;
    display: flex;
    align-items: center;
    gap: 10px;
    font-size: 12px;
    letter-spacing: -0.3px;
    color: #222;
}

.tray svg {
    width: 14px;
    height: 14px;
}

.tray svg.moon {
    width: 18px;
    height: 19px;
}

.temp {
    font-size: 13.500px;
    letter-spacing: 0;
    margin-right: 8px;
}

.lang {
    font-size: 13px;
    letter-spacing: 0;
}

.clock {
    display: flex;
    flex-direction: column;
    align-items: center;
    line-height: 19px;
    letter-spacing: -0.5px;
    margin: 0 8px 0 0.5px;
}

.tray svg.notify {
    width: 17px;
    height: 17px;
    margin-right: 24px;
}
```
